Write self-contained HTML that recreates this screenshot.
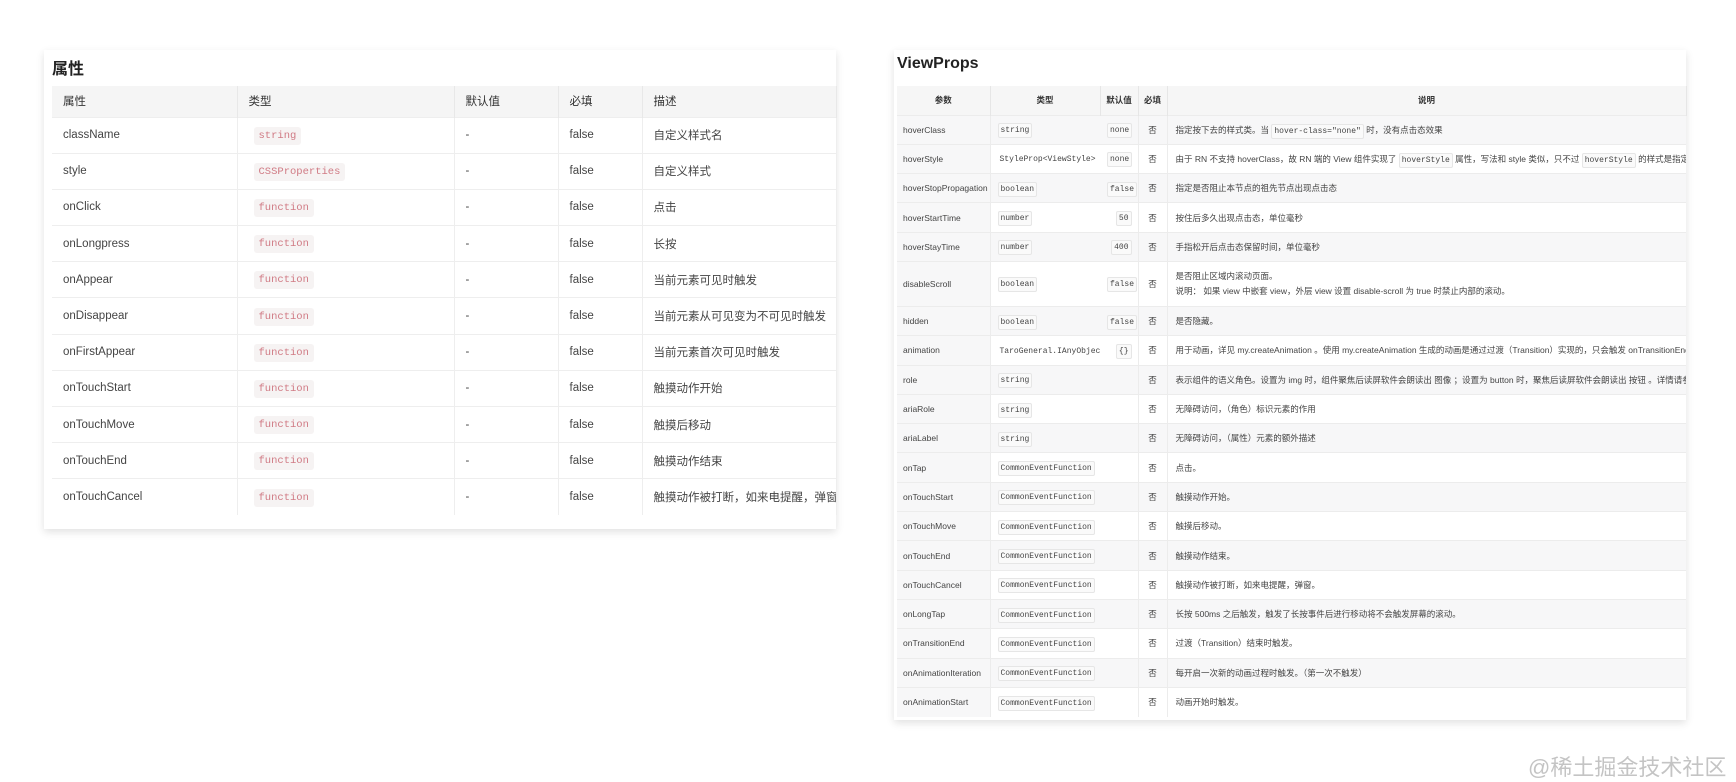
<!DOCTYPE html>
<html><head><meta charset="utf-8"><style>
*{margin:0;padding:0;box-sizing:border-box}
body{width:1736px;height:782px;background:#fff;position:relative;overflow:hidden;font-family:"Liberation Sans","Noto Sans CJK SC",sans-serif;color:#333}
.card{position:absolute;background:#fff;box-shadow:0 3px 8px rgba(0,0,0,.12)}
.t{position:absolute;font-weight:bold;color:#222}
table{position:absolute;border-collapse:collapse;table-layout:fixed}
#L{left:52px;top:86px;width:784px;font-size:11.5px}
#L th{height:31px;background:#f5f5f5;font-weight:normal;text-align:left;padding-left:11px;color:#333;border-right:1px solid #e8e8e8}
#L td{height:36.2px;padding-left:11px;border-top:1px solid #eee;border-right:1px solid #eee;color:#444;white-space:nowrap;overflow:hidden}
#L td:nth-child(2){padding-left:16px}
#L code{font-family:"Liberation Mono",monospace;font-size:10.5px;color:#d07a84;background:#f6f3f3;padding:3px 5px;border-radius:3px}
#R{left:897px;top:86px;width:789px;font-size:8.5px}
#R th{height:29px;background:#f6f6f6;font-weight:bold;text-align:center;border-right:1px solid #e6e6e6;color:#333;font-size:8.5px}
#R td{height:29.3px;padding-left:7px;border-top:1px solid #ececec;border-right:1px solid #ececec;color:#444;white-space:nowrap;overflow:hidden}
#R td:first-child{background:#f7f7f8;padding-left:6px}
#R tr:nth-child(even) td{background:#f7f7f8}
#R td.d{text-align:right;padding-right:6px;border-right:1px solid #ececec}
#R td.c{border-right:none;padding-left:8px}
#R td.y{text-align:center;padding-left:0}
#R code{font-family:"Liberation Mono",monospace;font-size:8px;border:1px solid #e6e6e6;padding:2px 2px;border-radius:2px;background:#fafafa}
.wm{position:absolute;left:1528px;top:750px;font-size:22px;color:#c4c4c4}
</style></head><body>
<div class="card" style="left:44px;top:50px;width:792px;height:479px"></div>
<div class="t" style="left:52px;top:55px;font-size:16px">属性</div>
<table id="L">
<colgroup><col style="width:185px"><col style="width:217px"><col style="width:104px"><col style="width:84px"><col style="width:194px"></colgroup>
<tr><th>属性</th><th>类型</th><th>默认值</th><th>必填</th><th>描述</th></tr>
<tr><td>className</td><td><code>string</code></td><td>-</td><td>false</td><td>自定义样式名</td></tr>
<tr><td>style</td><td><code>CSSProperties</code></td><td>-</td><td>false</td><td>自定义样式</td></tr>
<tr><td>onClick</td><td><code>function</code></td><td>-</td><td>false</td><td>点击</td></tr>
<tr><td>onLongpress</td><td><code>function</code></td><td>-</td><td>false</td><td>长按</td></tr>
<tr><td>onAppear</td><td><code>function</code></td><td>-</td><td>false</td><td>当前元素可见时触发</td></tr>
<tr><td>onDisappear</td><td><code>function</code></td><td>-</td><td>false</td><td>当前元素从可见变为不可见时触发</td></tr>
<tr><td>onFirstAppear</td><td><code>function</code></td><td>-</td><td>false</td><td>当前元素首次可见时触发</td></tr>
<tr><td>onTouchStart</td><td><code>function</code></td><td>-</td><td>false</td><td>触摸动作开始</td></tr>
<tr><td>onTouchMove</td><td><code>function</code></td><td>-</td><td>false</td><td>触摸后移动</td></tr>
<tr><td>onTouchEnd</td><td><code>function</code></td><td>-</td><td>false</td><td>触摸动作结束</td></tr>
<tr><td>onTouchCancel</td><td><code>function</code></td><td>-</td><td>false</td><td>触摸动作被打断，如来电提醒，弹窗</td></tr>
</table>

<div class="card" style="left:894px;top:50px;width:792px;height:670px"></div>
<div class="t" style="left:897px;top:55px;font-size:16px">ViewProps</div>
<table id="R">
<colgroup><col style="width:93px"><col style="width:110px"><col style="width:38px"><col style="width:29px"><col style="width:519px"></colgroup>
<tr><th>参数</th><th>类型</th><th>默认值</th><th>必填</th><th>说明</th></tr>
<tr><td>hoverClass</td><td style="border-right:none"><code>string</code></td><td class="d"><code>none</code></td><td class="y">否</td><td class="c">指定按下去的样式类。当 <code>hover-class="none"</code> 时，没有点击态效果</td></tr>
<tr><td>hoverStyle</td><td style="border-right:none"><code style="border:none;background:none">StyleProp&lt;ViewStyle&gt;</code></td><td class="d"><code>none</code></td><td class="y">否</td><td class="c">由于 RN 不支持 hoverClass，故 RN 端的 View 组件实现了 <code>hoverStyle</code> 属性，写法和 style 类似，只不过 <code>hoverStyle</code> 的样式是指定按下去的样式。</td></tr>
<tr><td>hoverStopPropagation</td><td style="border-right:none"><code>boolean</code></td><td class="d"><code>false</code></td><td class="y">否</td><td class="c">指定是否阻止本节点的祖先节点出现点击态</td></tr>
<tr><td>hoverStartTime</td><td style="border-right:none"><code>number</code></td><td class="d"><code>50</code></td><td class="y">否</td><td class="c">按住后多久出现点击态，单位毫秒</td></tr>
<tr><td>hoverStayTime</td><td style="border-right:none"><code>number</code></td><td class="d"><code>400</code></td><td class="y">否</td><td class="c">手指松开后点击态保留时间，单位毫秒</td></tr>
<tr><td style="height:45px">disableScroll</td><td style="border-right:none"><code>boolean</code></td><td class="d"><code>false</code></td><td class="y">否</td><td class="c" style="line-height:15px">是否阻止区域内滚动页面。<br>说明： 如果 view 中嵌套 view，外层 view 设置 disable-scroll 为 true 时禁止内部的滚动。</td></tr>
<tr><td>hidden</td><td style="border-right:none"><code>boolean</code></td><td class="d"><code>false</code></td><td class="y">否</td><td class="c">是否隐藏。</td></tr>
<tr><td>animation</td><td style="border-right:none"><code style="border:none;background:none">TaroGeneral.IAnyObject</code></td><td class="d"><code>{}</code></td><td class="y">否</td><td class="c">用于动画，详见 my.createAnimation 。使用 my.createAnimation 生成的动画是通过过渡（Transition）实现的，只会触发 onTransitionEnd，不会触发</td></tr>
<tr><td>role</td><td style="border-right:none"><code>string</code></td><td class="d"></td><td class="y">否</td><td class="c">表示组件的语义角色。设置为 img 时，组件聚焦后读屏软件会朗读出 图像 ；设置为 button 时，聚焦后读屏软件会朗读出 按钮 。详情请参见 aria-comp</td></tr>
<tr><td>ariaRole</td><td style="border-right:none"><code>string</code></td><td class="d"></td><td class="y">否</td><td class="c">无障碍访问，（角色）标识元素的作用</td></tr>
<tr><td>ariaLabel</td><td style="border-right:none"><code>string</code></td><td class="d"></td><td class="y">否</td><td class="c">无障碍访问，（属性）元素的额外描述</td></tr>
<tr><td>onTap</td><td style="border-right:none"><code>CommonEventFunction</code></td><td class="d"></td><td class="y">否</td><td class="c">点击。</td></tr>
<tr><td>onTouchStart</td><td style="border-right:none"><code>CommonEventFunction</code></td><td class="d"></td><td class="y">否</td><td class="c">触摸动作开始。</td></tr>
<tr><td>onTouchMove</td><td style="border-right:none"><code>CommonEventFunction</code></td><td class="d"></td><td class="y">否</td><td class="c">触摸后移动。</td></tr>
<tr><td>onTouchEnd</td><td style="border-right:none"><code>CommonEventFunction</code></td><td class="d"></td><td class="y">否</td><td class="c">触摸动作结束。</td></tr>
<tr><td>onTouchCancel</td><td style="border-right:none"><code>CommonEventFunction</code></td><td class="d"></td><td class="y">否</td><td class="c">触摸动作被打断，如来电提醒，弹窗。</td></tr>
<tr><td>onLongTap</td><td style="border-right:none"><code>CommonEventFunction</code></td><td class="d"></td><td class="y">否</td><td class="c">长按 500ms 之后触发，触发了长按事件后进行移动将不会触发屏幕的滚动。</td></tr>
<tr><td>onTransitionEnd</td><td style="border-right:none"><code>CommonEventFunction</code></td><td class="d"></td><td class="y">否</td><td class="c">过渡（Transition）结束时触发。</td></tr>
<tr><td>onAnimationIteration</td><td style="border-right:none"><code>CommonEventFunction</code></td><td class="d"></td><td class="y">否</td><td class="c">每开启一次新的动画过程时触发。（第一次不触发）</td></tr>
<tr><td>onAnimationStart</td><td style="border-right:none"><code>CommonEventFunction</code></td><td class="d"></td><td class="y">否</td><td class="c">动画开始时触发。</td></tr>
</table>
<div class="wm">@稀土掘金技术社区</div>
</body></html>
